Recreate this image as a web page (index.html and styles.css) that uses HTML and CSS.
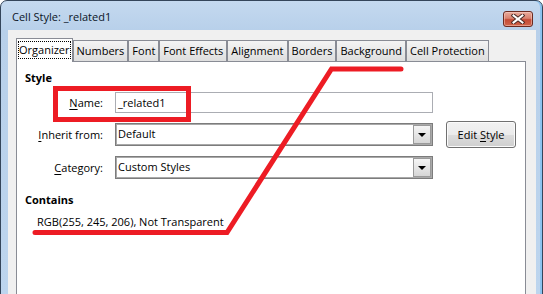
FILE: index.html
```html
<!DOCTYPE html>
<html>
<head>
<meta charset="utf-8">
<link rel="stylesheet" href="styles.css">
</head>
<body>
<div class="window">
  <div class="titlebar">
    <span class="title">Cell Style: _related1</span>
    <div class="close">
      <svg width="14" height="10" viewBox="0 0 14 10">
        <path d="M2.5 1.5 L11.5 8.5 M11.5 1.5 L2.5 8.5" stroke="#4a2a25" stroke-width="4" stroke-linecap="square" fill="none"/>
        <path d="M2.5 1.5 L11.5 8.5 M11.5 1.5 L2.5 8.5" stroke="#ffffff" stroke-width="2" stroke-linecap="square" fill="none"/>
      </svg>
    </div>
  </div>
  <div class="client">
    <div class="tabs">
      <div class="tab active"><span class="focus">Organizer</span></div>
      <div class="tab">Numbers</div>
      <div class="tab">Font</div>
      <div class="tab">Font Effects</div>
      <div class="tab">Alignment</div>
      <div class="tab">Borders</div>
      <div class="tab">Background</div>
      <div class="tab">Cell Protection</div>
    </div>
    <div class="panel">
      <div class="heading">Style</div>
      <div class="form">
        <label class="lbl"><u>N</u>ame:</label>
        <div class="input">_related1</div>
        <div class="spacer"></div>
        <label class="lbl"><u>I</u>nherit from:</label>
        <div class="select"><span class="val">Default</span><span class="drop"><span class="tri"></span></span></div>
        <div class="btn">Edit <u>S</u>tyle</div>
        <label class="lbl"><u>C</u>ategory:</label>
        <div class="select"><span class="val">Custom Styles</span><span class="drop"><span class="tri"></span></span></div>
      </div>
      <div class="heading contains-h">Contains</div>
      <div class="contains">RGB(255, 245, 206), Not Transparent</div>
    </div>
  </div>
</div>
<svg class="annot" width="543" height="294" viewBox="0 0 543 294">
  <rect x="55.5" y="88.5" width="133" height="31" fill="none" stroke="#ed1c24" stroke-width="5"/>
  <polyline points="35,232.5 227,232.5 331.5,69 401,69" fill="none" stroke="#ed1c24" stroke-width="5" stroke-linecap="round" stroke-linejoin="miter"/>
</svg>
</body>
</html>
```
FILE: styles.css
```css
* { box-sizing: border-box; }
html, body { margin: 0; padding: 0; }
body {
  width: 543px;
  height: 294px;
  overflow: hidden;
  background: #ffffff;
  position: relative;
  font-family: "Open Sans", "Noto Sans", sans-serif;
  font-size: 11px;
  color: #000;
}
u { text-decoration: underline; text-underline-offset: 2px; }

.window {
  width: 543px;
  height: 300px;
  border: 1px solid #34455a;
  border-radius: 7px 7px 0 0;
  background: linear-gradient(to bottom, #c4d9ef 0px, #b8d0ea 29px, #bdd5ee 100%);
  padding: 0 6px 0 7px;
  display: flex;
  flex-direction: column;
  box-shadow: inset -2px 0 0 #8cc3ef;
}

.titlebar {
  height: 29px;
  display: flex;
  align-items: flex-start;
  flex: none;
}
.title {
  padding-left: 4px;
  margin-top: 8px;
  line-height: 16px;
  font-size: 11px;
  color: #0b1426;
}
.close {
  margin-left: auto;
  margin-top: 10px;
  margin-right: 3px;
  width: 30px;
  height: 16px;
  border: 1px solid #6b2a20;
  border-radius: 3px;
  background: linear-gradient(to bottom, #e8ab9c 0%, #d9826f 45%, #c44a35 55%, #d0654a 100%);
  display: flex;
  align-items: center;
  justify-content: center;
  box-shadow: inset 0 0 0 1px rgba(255,220,210,0.45);
}
.close svg { display: block; }

.client {
  flex: 1;
  background: #f0f0f0;
  padding: 8px 10px 0 8px;
  display: flex;
  flex-direction: column;
}

.tabs {
  display: flex;
  align-items: flex-end;
  height: 23px;
  flex: none;
}
.tab {
  height: 21px;
  border: 1px solid #898c95;
  border-bottom: none;
  padding: 0 3px;
  line-height: 19px;
  background: linear-gradient(to bottom, #f4f4f4 0%, #e9e9e9 50%, #dedede 100%);
  white-space: nowrap;
}
.tab.active {
  height: 24px;
  margin-bottom: -1px;
  background: #ffffff;
  position: relative;
  z-index: 1;
  padding: 2px 1px 0 1px;
  line-height: 17px;
}
.focus {
  display: block;
  border: 1px dotted #000;
  padding: 0;
  line-height: 16px;
}

.panel {
  flex: 1;
  background: #ffffff;
  border: 1px solid #898c95;
  padding: 8px 0 0 8px;
}
.heading {
  font-weight: 700;
  line-height: 16px;
}
.form {
  margin-top: 6px;
  display: grid;
  grid-template-columns: 78px 318px 71px;
  grid-template-rows: 21px 27px 23px;
  column-gap: 12px;
  row-gap: 8px;
  align-items: center;
}
.lbl {
  text-align: right;
  line-height: 16px;
}
.input {
  height: 21px;
  border: 1px solid #abadb3;
  background: #fff;
  padding-left: 2px;
  line-height: 19px;
}
.select {
  height: 23px;
  border: 1px solid #7c7c7c;
  box-shadow: inset 0 0 0 1px #a9a9a9;
  background: #fff;
  display: flex;
  align-items: stretch;
}
.select .val {
  flex: 1;
  padding-left: 2px;
  line-height: 20px;
}
.drop {
  width: 18px;
  margin: 1px;
  border: 1px solid #9a9a9a;
  background: linear-gradient(to bottom, #f5f5f5 0%, #e6e6e6 50%, #d6d6d6 100%);
  display: flex;
  align-items: center;
  justify-content: center;
}
.tri {
  width: 0;
  height: 0;
  border-left: 4px solid transparent;
  border-right: 4px solid transparent;
  border-top: 4px solid #000;
}
.btn {
  margin-left: 1px;
  height: 27px;
  border: 1px solid #707070;
  border-radius: 3px;
  background: linear-gradient(to bottom, #f2f2f2 0%, #ebebeb 50%, #dddddd 51%, #cfcfcf 100%);
  box-shadow: inset 0 0 0 1px #fbfbfb;
  text-align: center;
  line-height: 25px;
}
.contains-h {
  margin-top: 13px;
}
.contains {
  margin-top: 6px;
  padding-left: 12px;
  line-height: 16px;
}

.annot {
  position: absolute;
  left: 0;
  top: 0;
  pointer-events: none;
}
```
